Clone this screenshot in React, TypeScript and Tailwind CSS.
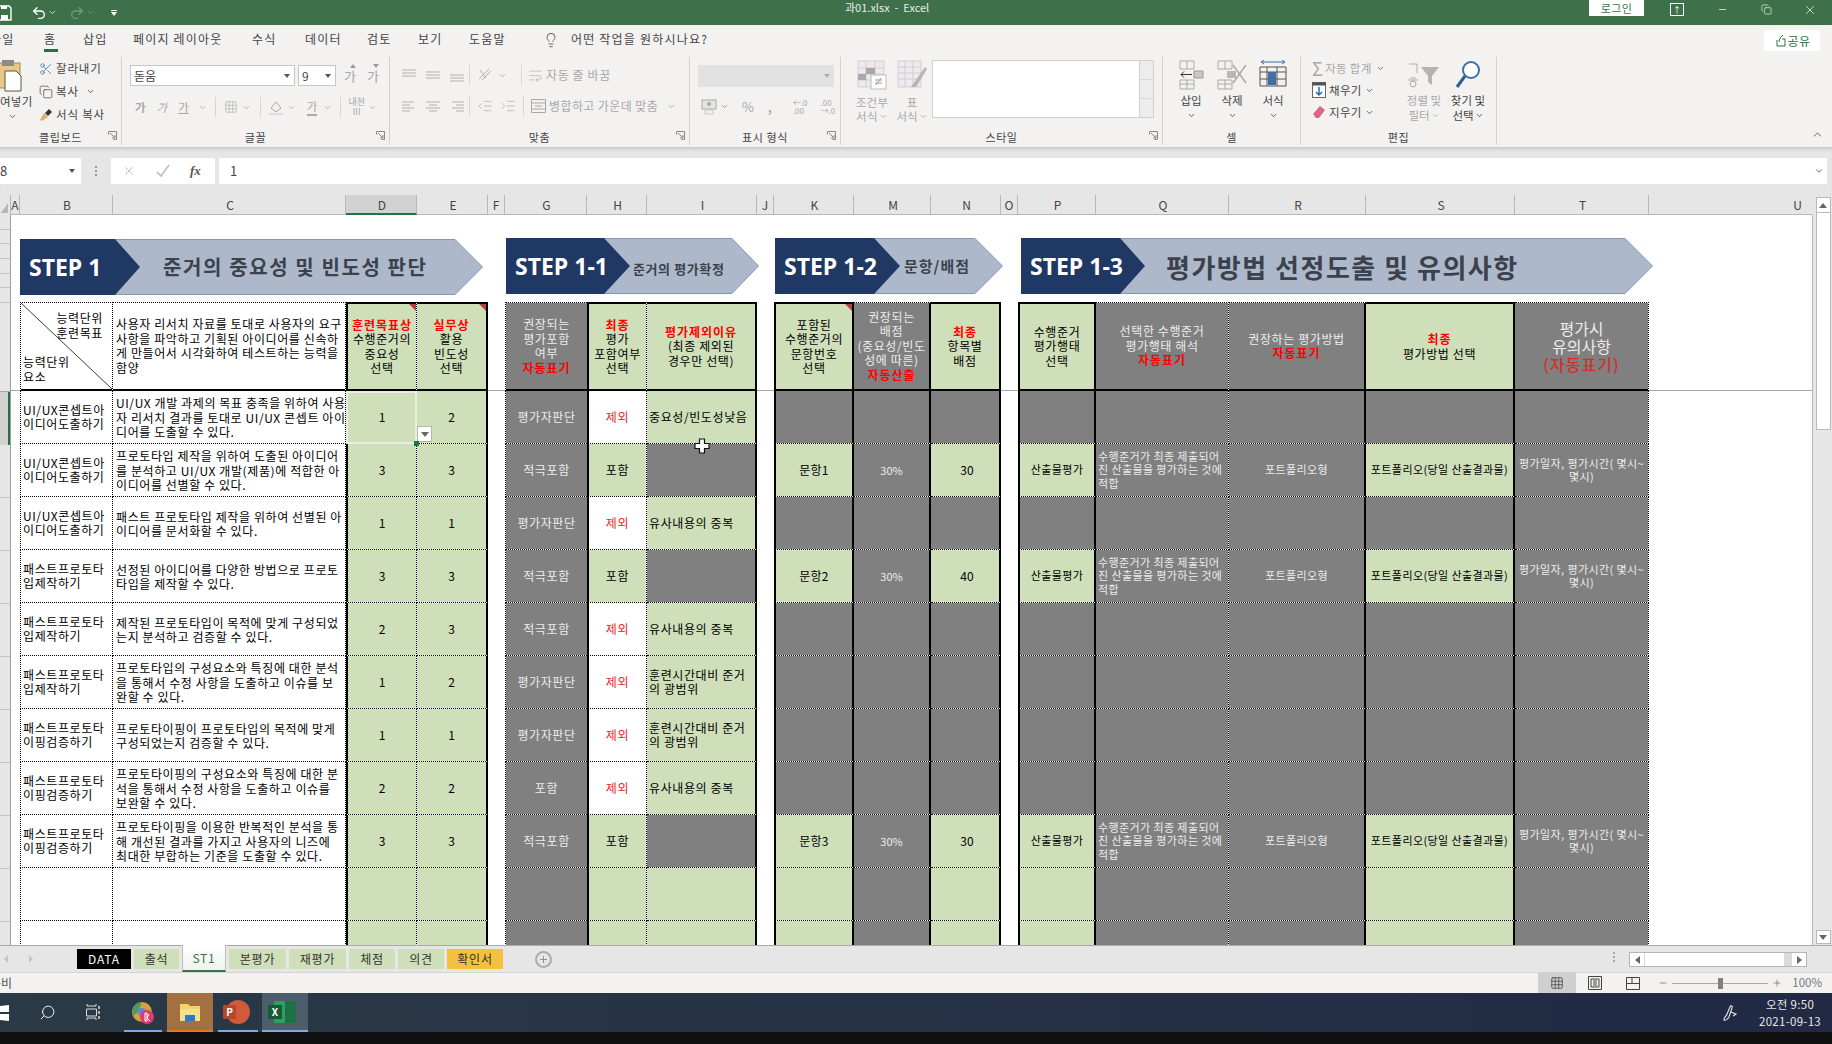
import { Fragment, type ReactNode } from "react";
import {
  ChevronDown,
  ChevronUp,
  Copy,
  Grid3x3,
  IndentDecrease,
  IndentIncrease,
  Lightbulb,
  Minus,
  Plus,
  Redo2,
  Scissors,
  Search,
  Undo2,
  WrapText,
  X,
} from "lucide-react";
import clsx from "clsx";

const cellBase = "border-b border-dotted border-black bg-clip-padding";
const R2 = "border-r-2 border-r-black [border-right-style:solid]!";
const L2 = "border-l-2 border-l-black [border-left-style:solid]!";
const T2 = "border-t-2 border-t-black [border-top-style:solid]!";
const B2 = "border-b-2 border-b-black [border-bottom-style:solid]!";

const edge: Record<string, string> = {
  B: "border-l border-r",
  C: "border-r",
  D: `${L2} border-r`,
  E: R2,
  G: "border-l",
  H: `${L2} border-r`,
  I: R2,
  K: `${L2} ${R2}`,
  M: R2,
  N: R2,
  P: `${L2} ${R2}`,
  Q: "border-r",
  R: R2,
  S: R2,
  T: "border-r",
};

const fills = { w: "bg-white", g: "bg-[#cfdfba]", x: "bg-[#808080]" };
type Fill = keyof typeof fills;

type Row = {
  b?: string[];
  c?: string[];
  d?: string;
  e?: string;
  g?: string;
  h?: string;
  i?: string[];
  k?: string;
  n?: string;
  filled?: boolean;
};

const UX = ["UI/UX콘셉트아", "이디어도출하기"];
const MAKE = ["패스트프로토타", "입제작하기"];
const TEST = ["패스트프로토타", "이핑검증하기"];
const DUP = ["유사내용의 중복"];
const WIDE = ["훈련시간대비 준거", "의 광범위"];

const rows: Row[] = [
  { b: UX, c: ["UI/UX 개발 과제의 목표 충족을 위하여 사용", "자 리서치 결과를 토대로 UI/UX 콘셉트 아이", "디어를 도출할 수 있다."], d: "1", e: "2", g: "평가자판단", h: "제외", i: ["중요성/빈도성낮음"] },
  { b: UX, c: ["프로토타입 제작을 위하여 도출된 아이디어", "를 분석하고 UI/UX 개발(제품)에 적합한 아", "이디어를 선별할 수 있다."], d: "3", e: "3", g: "적극포함", h: "포함", k: "문항1", n: "30", filled: true },
  { b: UX, c: ["패스트 프로토타입 제작을 위하여 선별된 아", "이디어를 문서화할 수 있다."], d: "1", e: "1", g: "평가자판단", h: "제외", i: DUP },
  { b: MAKE, c: ["선정된 아이디어를 다양한 방법으로 프로토", "타입을 제작할 수 있다."], d: "3", e: "3", g: "적극포함", h: "포함", k: "문항2", n: "40", filled: true },
  { b: MAKE, c: ["제작된 프로토타입이 목적에 맞게 구성되었", "는지 분석하고 검증할 수 있다."], d: "2", e: "3", g: "적극포함", h: "제외", i: DUP },
  { b: MAKE, c: ["프로토타입의 구성요소와 특징에 대한 분석", "을 통해서 수정 사항을 도출하고 이슈를 보", "완할 수 있다."], d: "1", e: "2", g: "평가자판단", h: "제외", i: WIDE },
  { b: TEST, c: ["프로토타이핑이 프로토타입의 목적에 맞게", "구성되었는지 검증할 수 있다."], d: "1", e: "1", g: "평가자판단", h: "제외", i: WIDE },
  { b: TEST, c: ["프로토타이핑의 구성요소와 특징에 대한 분", "석을 통해서 수정 사항을 도출하고 이슈를", "보완할 수 있다."], d: "2", e: "2", g: "포함", h: "제외", i: DUP },
  { b: TEST, c: ["프로토타이핑을 이용한 반복적인 분석을 통", "해 개선된 결과를 가지고 사용자의 니즈에", "최대한 부합하는 기준을 도출할 수 있다."], d: "3", e: "3", g: "적극포함", h: "포함", k: "문항3", n: "30", filled: true },
  {},
  {},
];

function Lines({ lines, className }: { lines: string[]; className?: string }) {
  return (
    <div className={clsx("leading-[14.5px] tracking-[0.6px] text-[12px] whitespace-nowrap", className)}>
      {lines.map((l, i) => (
        <div key={i}>{l}</div>
      ))}
    </div>
  );
}

function Cell({
  col,
  fill = "w",
  className,
  children,
}: {
  col: string;
  fill?: Fill;
  className?: string;
  children?: ReactNode;
}) {
  return (
    <div className={clsx(cellBase, edge[col], fills[fill], "relative flex min-w-0 items-center", className)}>
      {children}
    </div>
  );
}

function Mid({ children, className }: { children: ReactNode; className?: string }) {
  return <div className={clsx("w-full text-center", className)}>{children}</div>;
}

const Red = ({ children }: { children: ReactNode }) => (
  <div className="font-bold tracking-[1px] text-[#ff0000]">{children}</div>
);

function DataRow({ row, index }: { row: Row; index: number }) {
  const blank = row.b === undefined;
  const f = row.filled;
  const white = "text-[#ececec]";
  const small = "text-[11px] leading-[13.3px] tracking-[0.4px]";
  return (
    <Fragment>
      <div />
      <Cell col="B" className="pl-[2px]">{row.b && <Lines lines={row.b} />}</Cell>
      <Cell col="C" className="pl-[3px] pt-[2px]">{row.c && <Lines lines={row.c} />}</Cell>
      <Cell col="D" fill="g" className={index === 0 ? "outline outline-2 -outline-offset-2 outline-[#e8efe2]" : ""}>
        <Mid className="text-[12px]">{row.d}</Mid>
      </Cell>
      <Cell col="E" fill="g">
        <Mid className="text-[12px]">{row.e}</Mid>
        {index === 0 && (
          <>
            <div className="absolute left-0 top-[35px] z-10 flex h-[16px] w-[15px] items-center justify-center border border-[#b5b5b5] bg-white">
              <div className="h-0 w-0 border-x-[4px] border-t-[5px] border-x-transparent border-t-[#666]" />
            </div>
            <div className="absolute -left-[3px] -bottom-[3px] z-10 h-[5px] w-[5px] bg-[#217346]" />
          </>
        )}
      </Cell>
      <div />
      <Cell col="G" fill="x">
        <Mid className={clsx("text-[12px] tracking-[0.6px]", white)}>{row.g}</Mid>
      </Cell>
      <Cell col="H" fill={blank || row.h === "포함" ? "g" : "w"}>
        <Mid className={clsx("text-[12px] tracking-[0.6px]", row.h === "제외" ? "text-[#e82727]" : "text-black")}>{row.h}</Mid>
      </Cell>
      <Cell col="I" fill={f ? "x" : "g"} className="pl-[2px]">
        {row.i && <Lines lines={row.i} />}
        {index === 0 && (
          <svg viewBox="0 0 16 16" className="absolute left-[47px] -bottom-[11px] z-20 h-[16px] w-[16px]">
            <path d="M5.5 1h5v4.5H15v5h-4.500V15h-5v-4.500H1v-5h4.500z" fill="#fff" stroke="#111" strokeWidth="1.200" />
          </svg>
        )}
      </Cell>
      <div />
      <Cell col="K" fill={f || blank ? "g" : "x"}>
        <Mid className="text-[12px] tracking-[0.3px]">{row.k}</Mid>
      </Cell>
      <Cell col="M" fill="x">
        <Mid className={clsx("text-[11px]", white)}>{f ? "30%" : ""}</Mid>
      </Cell>
      <Cell col="N" fill={f || blank ? "g" : "x"}>
        <Mid className="text-[12px] pl-[4px]">{row.n}</Mid>
      </Cell>
      <div />
      <Cell col="P" fill={f || blank ? "g" : "x"}>
        <Mid className={small}>{f ? "산출물평가" : ""}</Mid>
      </Cell>
      <Cell col="Q" fill="x" className="pl-[2px]">
        {f && (
          <div className={clsx(small, white, "whitespace-nowrap")}>
            <div>수행준거가 최종 제출되어</div>
            <div>진 산출물을 평가하는 것에</div>
            <div>적합</div>
          </div>
        )}
      </Cell>
      <Cell col="R" fill="x">
        <Mid className={clsx(small, white)}>{f ? "포트폴리오형" : ""}</Mid>
      </Cell>
      <Cell col="S" fill={f || blank ? "g" : "x"}>
        <Mid className={clsx(small, "whitespace-nowrap")}>{f ? "포트폴리오(당일 산출결과물)" : ""}</Mid>
      </Cell>
      <Cell col="T" fill="x">
        {f && (
          <Mid className={clsx(small, white, "whitespace-nowrap")}>
            <div>평가일자, 평가시간( 몇시~</div>
            <div>몇시)</div>
          </Mid>
        )}
      </Cell>
      <div />
    </Fragment>
  );
}

function Tri() {
  return <div className="absolute right-0 top-0 h-0 w-0 border-l-[7px] border-t-[7px] border-l-transparent border-t-[#b5423c]" />;
}

function HeaderRow() {
  const head = "text-[12px] leading-[14.5px] tracking-[0.6px]";
  const light = "text-[#ececec]";
  const gap = <div className="border-b border-[#a6a6a6]" />;
  return (
    <Fragment>
      {gap}
      <Cell col="B" className={clsx(B2, "border-t text-[12px] tracking-[0.6px] leading-[14.500px]")}>
        <svg className="absolute inset-0 h-full w-full" viewBox="0 0 92 86" preserveAspectRatio="none">
          <line x1="0" y1="0" x2="92" y2="86" stroke="#222" strokeWidth="0.900" />
        </svg>
        <div className="flex h-full w-full flex-col justify-between pb-[5px] pl-[2px] pr-[9px] pt-[8px]">
          <div className="self-end">
            <div>능력단위</div>
            <div>훈련목표</div>
          </div>
          <div>
            <div>능력단위</div>
            <div>요소</div>
          </div>
        </div>
      </Cell>
      <Cell col="C" className={clsx(B2, "border-t pl-[3px]")}>
        <Lines lines={["사용자 리서치 자료를 토대로 사용자의 요구", "사항을 파악하고 기획된 아이디어를 신속하", "게 만들어서 시각화하여 테스트하는 능력을", "함양"]} />
      </Cell>
      <Cell col="D" fill="g" className={clsx(B2, T2, head)}>
        <Mid className="whitespace-nowrap"><Red>훈련목표상</Red><div>수행준거의</div><div>중요성</div><div>선택</div></Mid>
        <Tri />
      </Cell>
      <Cell col="E" fill="g" className={clsx(B2, T2, head)}>
        <Mid><Red>실무상</Red><div>활용</div><div>빈도성</div><div>선택</div></Mid>
        <Tri />
      </Cell>
      {gap}
      <Cell col="G" fill="x" className={clsx(B2, "border-t", head, light)}>
        <Mid><div>권장되는</div><div>평가포함</div><div>여부</div><Red>자동표기</Red></Mid>
      </Cell>
      <Cell col="H" fill="g" className={clsx(B2, T2, head)}>
        <Mid><Red>최종</Red><div>평가</div><div>포함여부</div><div>선택</div></Mid>
      </Cell>
      <Cell col="I" fill="g" className={clsx(B2, T2, head)}>
        <Mid><Red>평가제외이유</Red><div>(최종 제외된</div><div>경우만 선택)</div></Mid>
      </Cell>
      {gap}
      <Cell col="K" fill="g" className={clsx(B2, T2, head)}>
        <Mid><div>포함된</div><div>수행준거의</div><div>문항번호</div><div>선택</div></Mid>
        <Tri />
      </Cell>
      <Cell col="M" fill="x" className={clsx(B2, "border-t", head, light)}>
        <Mid className="whitespace-nowrap"><div>권장되는</div><div>배점</div><div>(중요성/빈도</div><div>성에 따른)</div><Red>자동산출</Red></Mid>
      </Cell>
      <Cell col="N" fill="g" className={clsx(B2, T2, head)}>
        <Mid><Red>최종</Red><div>항목별</div><div>배점</div></Mid>
      </Cell>
      {gap}
      <Cell col="P" fill="g" className={clsx(B2, T2, head)}>
        <Mid><div>수행준거</div><div>평가행태</div><div>선택</div></Mid>
      </Cell>
      <Cell col="Q" fill="x" className={clsx(B2, "border-t", head, light)}>
        <Mid className="whitespace-nowrap"><div>선택한 수행준거</div><div>평가행태 해석</div><Red>자동표기</Red></Mid>
      </Cell>
      <Cell col="R" fill="x" className={clsx(B2, "border-t", head, light)}>
        <Mid><div>권장하는 평가방법</div><Red>자동표기</Red></Mid>
      </Cell>
      <Cell col="S" fill="g" className={clsx(B2, T2, head)}>
        <Mid><Red>최종</Red><div>평가방법 선택</div></Mid>
      </Cell>
      <Cell col="T" fill="x" className={clsx(B2, "border-t text-[16px] leading-[18px]", light)}>
        <Mid><div>평가시</div><div>유의사항</div><div className="font-medium tracking-[1px] text-[#d62f2b]">(자동표기)</div></Mid>
      </Cell>
      {gap}
    </Fragment>
  );
}

function Banner({
  w,
  base,
  tip,
  end,
  step,
  stepW,
  title,
  titleClass,
  className,
}: {
  w: number;
  base: number;
  tip: number;
  end: number;
  step: string;
  stepW: number;
  title: string;
  titleClass: string;
  className: string;
}) {
  return (
    <div className={clsx("relative h-[56px]", className)}>
      <svg className="absolute inset-0" width={w} height={56} viewBox={`0 0 ${w} 56`}>
        <polygon points={`0.500,0.500 ${end},0.500 ${w - 0.5},28 ${end},55.500 0.500,55.500`} fill="#adb9ca" stroke="#8497b0" />
        <polygon points={`0,0 ${base},0 ${tip},28 ${base},56 0,56`} fill="#203864" />
      </svg>
      <div className="relative flex h-full items-center font-bold">
        <div className="shrink-0 pl-[9px] font-['Open_Sans',sans-serif] text-[23px] leading-none text-white" style={{ width: stepW }}>
          {step}
        </div>
        <div className={clsx("whitespace-nowrap text-[#3b414d]", titleClass)}>{title}</div>
      </div>
    </div>
  );
}

function Sheet() {
  return (
    <div className="grid h-[730px] min-w-0 flex-1 grid-cols-[9px_93px_233px_71px_71px_17px_82px_60px_110px_17px_80px_77px_70px_17px_78px_133px_137px_149px_134px_163px] grid-rows-[24px_56px_7px_89px_repeat(11,53px)] overflow-hidden bg-white text-black">
      <div className="col-span-full" />
      <Banner className="col-span-4 col-start-2 w-[463px]" w={463} base={95} tip={120} end={435} step="STEP 1" stepW={143} title="준거의 중요성 및 빈도성 판단" titleClass="text-[20px] tracking-[1.600px]" />
      <Banner className="col-span-3 col-start-7 ml-px -mt-px w-[253px]" w={253} base={98} tip={124} end={226} step="STEP 1-1" stepW={127} title="준거의 평가확정" titleClass="pt-[6px] text-[13px] tracking-[0.600px]" />
      <Banner className="col-span-3 col-start-11 ml-px -mt-px w-[228px]" w={228} base={99} tip={125} end={200} step="STEP 1-2" stepW={129} title="문항/배점" titleClass="text-[15px] tracking-[1px]" />
      <Banner className="col-span-6 col-start-15 ml-[3px] -mt-px w-[632px]" w={632} base={99} tip={124} end={604} step="STEP 1-3" stepW={145} title="평가방법 선정도출 및 유의사항" titleClass="text-[26px] tracking-[1.500px]" />
      <div className="col-span-full" />
      <HeaderRow />
      {rows.map((r, i) => (
        <DataRow key={i} row={r} index={i} />
      ))}
    </div>
  );
}

const colHeads = [
  ["A", 9], ["B", 93], ["C", 233], ["D", 71], ["E", 71], ["F", 17], ["G", 82], ["H", 60], ["I", 110], ["J", 17],
  ["K", 80], ["M", 77], ["N", 70], ["O", 17], ["P", 78], ["Q", 133], ["R", 137], ["S", 149], ["T", 134],
] as const;

function ColumnHeader() {
  return (
    <div className="flex h-[20px] bg-[#e6e6e6] text-[12px] leading-[20px] text-[#444]">
      <div className="relative h-full w-[11px] shrink-0 border-r border-[#b5b5b5]">
        <div className="absolute bottom-[2px] right-[2px] h-0 w-0 border-b-[10px] border-l-[7px] border-b-[#b7b7b7] border-l-transparent" />
      </div>
      {colHeads.map(([name, w]) => (
        <div
          key={name}
          style={{ width: w }}
          className={clsx(
            "shrink-0 border-r border-b border-[#b9b9b9] text-center",
            w > 20 && "pl-[2px]",
            name === "D" && "border-b-2 border-b-[#217346] bg-[#d2d2d2]",
          )}
        >
          {name}
        </div>
      ))}
      <div className="w-[163px] shrink-0 border-b border-[#b9b9b9] pr-[10px] text-right">U</div>
      <div className="flex h-full w-[20px] items-center justify-center pl-[2px]">
        <div className="flex h-[16px] w-[15px] items-center justify-center border border-[#b9b9b9] bg-white">
          <div className="h-0 w-0 border-x-[4px] border-b-[5px] border-x-transparent border-b-[#666]" />
        </div>
      </div>
    </div>
  );
}

function RowHeader() {
  const small = [0, 1, 2, 3, 4, 5];
  return (
    <div className="flex h-[730px] w-[11px] shrink-0 flex-col overflow-hidden border-r border-[#9f9f9f] bg-[#e6e6e6]">
      {small.map((i) => (
        <div key={i} className="h-[14.670px] shrink-0 border-b border-[#c4c4c4]" />
      ))}
      <div className="h-[89px] shrink-0 border-b border-[#a6a6a6]" />
      <div className="h-[53px] shrink-0 border-r-2 border-r-[#217346] bg-[#d2d2d2]" />
      {rows.slice(1).map((_, i) => (
        <div key={i} className="h-[53px] shrink-0 border-b border-[#c4c4c4]" />
      ))}
    </div>
  );
}

function VScroll() {
  return (
    <div className="flex h-[730px] w-[20px] shrink-0 flex-col items-center border-l border-[#b9b9b9] bg-[#e6e6e6] pl-px">
      <div className="mt-[-3px] h-[218px] w-[15px] shrink-0 border border-[#b9b9b9] bg-white" />
      <div className="flex-1" />
      <div className="mb-[1px] flex h-[14px] w-[15px] items-center justify-center border border-[#b9b9b9] bg-white">
        <div className="h-0 w-0 border-x-[4px] border-t-[5px] border-x-transparent border-t-[#666]" />
      </div>
    </div>
  );
}

function Caret({ className }: { className?: string }) {
  return <ChevronDown size={9} strokeWidth={2.2} className={clsx("shrink-0", className)} />;
}

function Bars({ rows: bars, gray = true }: { rows: number[][]; gray?: boolean }) {
  return (
    <svg width="16" height="14" viewBox="0 0 16 14" className="shrink-0">
      {bars.map(([a, b, y], i) => (
        <line key={i} x1={a} x2={b} y1={y} y2={y} stroke={gray ? "#b0b0b0" : "#555"} strokeWidth="1" />
      ))}
    </svg>
  );
}

function Launcher() {
  return (
    <svg width="9" height="9" viewBox="0 0 9 9" className="absolute bottom-[5px] right-[4px]">
      <path d="M.5 3.500V.5h8v8h-3M2 2l5 5M4 7h3V4" fill="none" stroke="#888" />
    </svg>
  );
}

function Group({
  w,
  label,
  launcher,
  children,
  className,
}: {
  w: number;
  label: string;
  launcher?: boolean;
  children: ReactNode;
  className?: string;
}) {
  return (
    <div style={{ width: w }} className={clsx("relative flex h-[88px] shrink-0 flex-col border-r border-[#d2d2d2]", className)}>
      <div className="min-h-0 flex-1">{children}</div>
      <div className="text-center text-[11px] leading-[16px] tracking-[0.6px] text-[#444]">{label}</div>
      {launcher && <Launcher />}
    </div>
  );
}

function Vsep({ className }: { className: string }) {
  return <div className={clsx("h-[20px] w-px shrink-0 bg-[#d6d6d6]", className)} />;
}

const D = "text-[#a8a8a8]";

function Ribbon() {
  return (
    <div className="h-[122px] bg-[#f3f2f1] text-[#444]">
      <div className="flex h-[32px] items-end pb-[6px] text-[12px] leading-[24px] tracking-[1.200px]">
        <div className="-ml-[10px] w-[54px]">파일</div>
        <div className="relative w-[39px]">
          홈
          <div className="absolute -bottom-[1px] left-0 h-[3px] w-[14px] bg-[#217346]" />
        </div>
        <div className="w-[50px]">삽입</div>
        <div className="w-[119px]">페이지 레이아웃</div>
        <div className="w-[53px]">수식</div>
        <div className="w-[62px]">데이터</div>
        <div className="w-[51px]">검토</div>
        <div className="w-[51px]">보기</div>
        <div className="w-[74px]">도움말</div>
        <Lightbulb size={16} strokeWidth={1.200} className="mb-[3px] shrink-0" />
        <div className="ml-[12px]">어떤 작업을 원하시나요?</div>
        <div className="ml-auto mr-[12px] flex h-[21px] w-[56px] items-center justify-center gap-[2px] bg-white text-[#2c6e49]">
          <svg width="12" height="13" viewBox="0 0 12 13"><path d="M3 6v6h8V5H8M5 8l1-4 3-3" fill="none" stroke="#2c6e49" /></svg>
          <span className="tracking-[0.4px]">공유</span>
        </div>
      </div>
      <div className="flex h-[90px] items-start text-[11.500px]">
        <Group w={122} label="클립보드" launcher>
          <div className="flex h-full">
            <div className="relative w-[34px] shrink-0 overflow-hidden">
              <svg width="34" height="40" viewBox="0 0 34 40" className="mt-[1px]">
                <rect x="-16" y="5" width="36" height="25" fill="#e8c884" stroke="#9c8a5c" />
                <rect x="2" y="2" width="12" height="6" fill="#8a8a8a" />
                <path d="M5 13h11l5 5v15H5z" fill="#fff" stroke="#555" />
              </svg>
              <div className="-ml-[11px] mt-[-5px] whitespace-nowrap text-[11.500px] tracking-[0.300px]">붙여넣기</div>
              <Caret className="ml-[8px] mt-[2px]" />
            </div>
            <div className="ml-[5px] flex flex-col gap-[6px] pt-[3px] tracking-[0.8px] leading-[17px]">
              <div className="flex items-center gap-[3px]"><Scissors size={14} strokeWidth={1.300} className="text-[#3f6fa5]" />잘라내기</div>
              <div className="flex items-center gap-[3px]"><Copy size={14} strokeWidth={1.200} />복사<Caret className="ml-[4px]" /></div>
              <div className="flex items-center gap-[3px]">
                <svg width="14" height="14" viewBox="0 0 14 14"><path d="M1 12l4-7 4 4-6 4z" fill="#d8b26e" /><path d="M6 5l4-4 3 3-4 4z" fill="#333" /></svg>
                서식 복사
              </div>
            </div>
          </div>
        </Group>
        <Group w={268} label="글꼴" launcher>
          <div className="flex items-center gap-[3px] pl-[8px] pt-[8px]">
            <div className="flex h-[21px] w-[165px] items-center justify-between border border-[#c6c6c6] bg-white pl-[3px] pr-[4px] text-[12px]">
              돋움
              <div className="h-0 w-0 border-x-[3px] border-t-[4px] border-x-transparent border-t-[#555]" />
            </div>
            <div className="flex h-[21px] w-[38px] items-center justify-between border border-[#c6c6c6] bg-white pl-[3px] pr-[4px] text-[12px]">
              9
              <div className="h-0 w-0 border-x-[3px] border-t-[4px] border-x-transparent border-t-[#555]" />
            </div>
            <div className={clsx("ml-[5px] flex gap-[11px] text-[13px]", D)}>
              <span className="relative">
                가
                <span className="absolute -top-[2px] right-0 h-0 w-0 border-x-[3px] border-b-[4px] border-x-transparent border-b-[#9a9a9a]" />
              </span>
              <span className="relative">
                가
                <span className="absolute -top-[2px] right-0 h-0 w-0 border-x-[3px] border-t-[4px] border-x-transparent border-t-[#9a9a9a]" />
              </span>
            </div>
          </div>
          <div className={clsx("flex items-center pl-[13px] pt-[11px] leading-[20px]", D)}>
            <span className="font-bold">가</span>
            <span className="ml-[11px] italic">가</span>
            <span className="ml-[11px] underline">가</span>
            <Caret className="ml-[9px]" />
            <Vsep className="ml-[8px] mr-[8px]" />
            <Grid3x3 size={14} strokeWidth={1} />
            <Caret className="ml-[4px]" />
            <Vsep className="ml-[9px] mr-[7px]" />
            <svg width="16" height="16" viewBox="0 0 16 16"><path d="M3 9l5-6 5 6-5 4z" fill="none" stroke="#a8a8a8" /><rect x="1" y="14" width="14" height="2" fill="#e4dbe6" /></svg>
            <Caret className="ml-[3px]" />
            <span className="ml-[11px] border-b-2 border-[#a8a8a8] leading-[15px]">가</span>
            <Caret className="ml-[6px]" />
            <Vsep className="ml-[8px] mr-[7px]" />
            <div className="flex flex-col items-center text-[9px] leading-[10px]">
              <span>내천</span>
              <span>III</span>
            </div>
            <Caret className="ml-[3px]" />
          </div>
        </Group>
        <Group w={300} label="맞춤" launcher>
          <div className="flex items-center pl-[11px] pt-[8px]">
            <div className="flex gap-[8px]">
              <Bars rows={[[1, 15, 2], [1, 15, 5], [1, 15, 8]]} />
              <Bars rows={[[1, 15, 4], [1, 15, 7], [1, 15, 10]]} />
              <Bars rows={[[1, 15, 7], [1, 15, 10], [1, 15, 13]]} />
            </div>
            <Vsep className="ml-[4px] mr-[7px]" />
            <svg width="18" height="18" viewBox="0 0 18 18"><path d="M2 13L12 3M5 14l9-9M3 4l6 8" fill="none" stroke="#b0b0b0" /></svg>
            <Caret className={clsx("ml-[3px]", D)} />
            <Vsep className="ml-[14px] mr-[6px]" />
            <div className={clsx("flex items-center gap-[3px] text-[12px] tracking-[0.6px]", D)}>
              <WrapText size={15} strokeWidth={1} />자동 줄 바꿈
            </div>
          </div>
          <div className="flex items-center pl-[11px] pt-[11px]">
            <div className="flex gap-[8px]">
              <Bars rows={[[1, 13, 3], [1, 9, 6], [1, 13, 9], [1, 9, 12]]} />
              <Bars rows={[[1, 15, 3], [4, 12, 6], [1, 15, 9], [4, 12, 12]]} />
              <Bars rows={[[3, 15, 3], [7, 15, 6], [3, 15, 9], [7, 15, 12]]} />
            </div>
            <Vsep className="ml-[4px] mr-[7px]" />
            <IndentDecrease size={16} strokeWidth={1} className={D} />
            <IndentIncrease size={16} strokeWidth={1} className={clsx("ml-[7px]", D)} />
            <Vsep className="ml-[7px] mr-[7px]" />
            <div className={clsx("flex items-center gap-[3px] text-[12px] tracking-[0.4px]", D)}>
              <svg width="15" height="16" viewBox="0 0 15 16"><path d="M.5 1.500h14v13H.5zM.5 5h14M.5 11h14M4 8h7" fill="none" stroke="#a8a8a8" /></svg>
              병합하고 가운데 맞춤
              <Caret className="ml-[6px]" />
            </div>
          </div>
        </Group>
        <Group w={151} label="표시 형식" launcher>
          <div className="pl-[8px] pt-[8px]">
            <div className="flex h-[22px] w-[136px] items-center justify-end bg-[#e1e1e1] pr-[4px]">
              <div className="h-0 w-0 border-x-[3px] border-t-[4px] border-x-transparent border-t-[#aaa]" />
            </div>
          </div>
          <div className={clsx("flex items-center pl-[11px] pt-[10px] text-[12px]", D)}>
            <svg width="17" height="16" viewBox="0 0 17 16"><rect x="1" y="1" width="14" height="9" fill="#e4e4e4" stroke="#a8a8a8" /><circle cx="8" cy="5" r="2" fill="#a8a8a8" /><rect x="4" y="11" width="8" height="4" fill="none" stroke="#c8c8c8" /></svg>
            <Caret className="ml-[2px] text-[#888]" />
            <span className="ml-[13px] text-[13px]">%</span>
            <span className="ml-[14px] font-bold">,</span>
            <span className="ml-[21px] text-[8px] leading-[8px]">←.0<br />.00</span>
            <span className="ml-[13px] text-[8px] leading-[8px]">.00<br />→.0</span>
          </div>
        </Group>
        <Group w={322} label="스타일" launcher>
          <div className="flex pl-[13px] pt-[3px]">
            <div className={clsx("flex w-[36px] flex-col items-center leading-[14px] tracking-[0.3px]", D)}>
              <svg width="30" height="30" viewBox="0 0 30 30">
                <path d="M1 1h26v26H1zM1 8h26M1 14h26M1 20h26M9 1v26M18 1v26" fill="#f1e7ee" stroke="#cfcfcf" />
                <rect x="9" y="8" width="9" height="6" fill="#a8a8a8" />
                <rect x="1" y="14" width="8" height="6" fill="#a8a8a8" />
                <rect x="14" y="15" width="15" height="14" fill="#fff" stroke="#bbb" />
                <path d="M19 25l5-7M18 20h7M18 23h7" stroke="#999" fill="none" />
              </svg>
              <div className="mt-[5px]">조건부</div>
              <div className="flex items-center">서식<Caret className="ml-[1px]" /></div>
            </div>
            <div className={clsx("ml-[4px] flex w-[36px] flex-col items-center leading-[14px]", D)}>
              <svg width="30" height="30" viewBox="0 0 30 30">
                <path d="M1 1h23v26H1zM1 7h23M1 13h23M1 19h23M8 1v26M16 1v26" fill="#f1e7ee" stroke="#cfcfcf" />
                <path d="M14 27L28 7l2 2-11 18z" fill="#b5b5b5" />
              </svg>
              <div className="mt-[5px]">표</div>
              <div className="flex items-center">서식<Caret className="ml-[1px]" /></div>
            </div>
            <div className="ml-[2px] flex h-[58px] w-[222px] border border-[#d0d0d0] bg-white">
              <div className="flex-1" />
              <div className="flex w-[14px] flex-col border-l border-[#d0d0d0] bg-[#ececec]">
                <div className="flex-1 border-b border-[#d8d8d8]" />
                <div className="flex-1 border-b border-[#d8d8d8]" />
                <div className="flex-1" />
              </div>
            </div>
          </div>
        </Group>
        <Group w={138} label="셀">
          <div className="flex gap-[5px] pl-[10px] pt-[3px] text-center leading-[14px]">
            {[
              ["삽입", <svg key="a" width="28" height="30" viewBox="0 0 28 30"><path d="M3 1h14v8H3zM3 20h14v9H3zM10 1v8M10 20v9M3 24h14" fill="none" stroke="#aaa" /><path d="M17 11h9v7h-9z" fill="#c8c8c8" stroke="#999" /><path d="M15 14.500H4m3-3-3 3 3 3" fill="none" stroke="#333" /></svg>],
              ["삭제", <svg key="b" width="32" height="30" viewBox="0 0 32 30"><path d="M2 1h14v8H2zM2 20h14v9H2zM9 1v8M9 20v9M2 24h14" fill="none" stroke="#aaa" /><rect x="11" y="11" width="9" height="7" fill="#b8b8b8" /><path d="M17 5l13 18M30 5L17 23" stroke="#aaa" strokeWidth="1.500" /></svg>],
              ["서식", <svg key="c" width="28" height="30" viewBox="0 0 28 30"><path d="M2 2h24M2 2l3-2M2 2l3 2M26 2l-3-2M26 2l-3 2" fill="none" stroke="#3f6fa5" /><path d="M1 7h26v19H1zM1 12h26M1 19h26M8 7v19M18 7v19" fill="none" stroke="#555" /><rect x="9" y="12" width="8" height="13" fill="#3f6fa5" /></svg>],
            ].map(([t, icon], i) => (
              <div key={i} className="flex w-[36px] flex-col items-center">
                {icon}
                <div className="mt-[3px]">{t}</div>
                <Caret className="mt-[4px]" />
              </div>
            ))}
          </div>
        </Group>
        <Group w={196} label="편집">
          <div className="flex pl-[11px] pt-[2px]">
            <div className="flex w-[91px] flex-col gap-[4px] leading-[18px] tracking-[0.3px]">
              <div className={clsx("flex items-center", D)}>
                <span className="text-[18px] leading-[18px]">Σ</span>
                <span className="ml-[2px] whitespace-nowrap">자동 합계</span>
                <Caret className="ml-[4px] text-[#555]" />
              </div>
              <div className="flex items-center">
                <svg width="14" height="16" viewBox="0 0 14 16"><rect x=".5" y=".5" width="13" height="15" fill="#fff" stroke="#666" /><rect x=".5" y=".5" width="13" height="3" fill="#555" /><path d="M7 5v8M4 10l3 3 3-3" fill="none" stroke="#2b6cb0" strokeWidth="1.500" /></svg>
                <span className="ml-[3px]">채우기</span>
                <Caret className="ml-[3px]" />
              </div>
              <div className="flex items-center">
                <svg width="14" height="14" viewBox="0 0 14 14"><path d="M1 9l7-8 5 4-6 8H4z" fill="#d9658c" /></svg>
                <span className="ml-[3px]">지우기</span>
                <Caret className="ml-[3px]" />
              </div>
            </div>
            <div className={clsx("flex w-[42px] flex-col items-center text-center leading-[15px]", D)}>
              <svg width="36" height="30" viewBox="0 0 36 30"><path d="M3 5h8v9" fill="none" stroke="#aaa" /><path d="M4 19h6M2 21h10M7 21v1" stroke="#aaa" fill="none" /><circle cx="7" cy="25" r="3" fill="none" stroke="#aaa" /><path d="M15 8h18l-7 9v9l-4-3v-6z" fill="#b4b4b4" /></svg>
              <div className="mt-[4px] whitespace-nowrap">정렬 및</div>
              <div className="flex items-center">필터<Caret className="ml-[1px]" /></div>
            </div>
            <div className="ml-[1px] flex w-[44px] flex-col items-center text-center leading-[15px]">
              <svg width="30" height="30" viewBox="0 0 30 30"><circle cx="18" cy="11" r="8" fill="#fff" stroke="#3f6fa5" strokeWidth="2" /><path d="M12 17L4 28" stroke="#2b5f94" strokeWidth="3" /></svg>
              <div className="mt-[4px] whitespace-nowrap">찾기 및</div>
              <div className="flex items-center">선택<Caret className="ml-[1px]" /></div>
            </div>
          </div>
        </Group>
        <div className="flex h-[86px] flex-1 items-end justify-end pb-[2px] pr-[8px]">
          <ChevronUp size={13} strokeWidth={1.500} />
        </div>
      </div>
    </div>
  );
}

function TitleBar() {
  return (
    <div className="relative flex h-[25px] items-center bg-[#3e714a] text-[11px] text-[#e6eee8]">
      <svg width="14" height="16" viewBox="0 0 14 16" className="-ml-[2px] shrink-0">
        <path d="M0 1h11l2 2v12H0z" fill="none" stroke="#fff" strokeWidth="1.400" />
        <rect x="3" y="10" width="7" height="5" fill="#fff" />
        <rect x="3" y="1" width="6" height="3" fill="#fff" />
      </svg>
      <Undo2 size={16} strokeWidth={2} className="ml-[19px] text-white" />
      <Caret className="ml-[1px] text-[#dfe9e2]" />
      <Redo2 size={16} strokeWidth={2} className="ml-[12px] text-[#6f9a7a]" />
      <Caret className="ml-[1px] text-[#6f9a7a]" />
      <div className="ml-[16px] flex flex-col items-center gap-[1px]">
        <div className="h-px w-[6px] bg-white" />
        <div className="h-0 w-0 border-x-[3px] border-t-[4px] border-x-transparent border-t-white" />
      </div>
      <div className="ml-[728px] pb-[11px] whitespace-nowrap">과01.xlsx&nbsp; - &nbsp;Excel</div>
      <div className="ml-auto flex h-full items-start">
        <div className="flex h-[16px] w-[55px] items-center justify-center bg-white text-[11px] tracking-[0.4px] text-[#3e714a]">로그인</div>
        <div className="ml-[26px] mt-[3px] flex h-[13px] w-[14px] items-center justify-center border border-white text-[8px] leading-none text-white">↑</div>
        <Minus size={11} strokeWidth={1.500} className="ml-[33px] mt-[4px] text-white" />
        <Copy size={11} strokeWidth={1.300} className="ml-[33px] mt-[4px] text-white" />
        <X size={14} strokeWidth={1.200} className="ml-[31px] mr-[15px] mt-[3px] text-white" />
      </div>
    </div>
  );
}

function FormulaBar() {
  return (
    <div className="flex h-[48px] items-center gap-0 bg-[#e6e6e6] pb-[1px] text-[#444] shadow-[inset_0_4px_4px_-3px_rgba(0,0,0,0.2)]">
      <div className="flex h-[26px] w-[81px] items-center justify-between bg-white pl-0 pr-[6px] text-[13px]">
        8
        <div className="h-0 w-0 border-x-[3px] border-t-[4px] border-x-transparent border-t-[#555]" />
      </div>
      <div className="flex w-[30px] flex-col items-center gap-[2px]">
        <div className="h-[2px] w-[2px] bg-[#999]" />
        <div className="h-[2px] w-[2px] bg-[#999]" />
        <div className="h-[2px] w-[2px] bg-[#999]" />
      </div>
      <div className="flex h-[26px] w-[104px] items-center bg-white pl-[11px] text-[#bdbdbd]">
        <X size={14} strokeWidth={1.500} />
        <svg width="16" height="14" viewBox="0 0 16 14" className="ml-[19px]"><path d="M2 8l4 4 8-11" fill="none" stroke="#bdbdbd" strokeWidth="1.600" /></svg>
        <span className="ml-[19px] font-['Liberation_Serif',serif] text-[13px] font-bold italic text-[#555]">fx</span>
      </div>
      <div className="ml-[4px] flex h-[26px] w-[1608px] items-center justify-between bg-white pl-[11px] pr-[3px] text-[13px]">
        1
        <ChevronDown size={10} strokeWidth={2} />
      </div>
    </div>
  );
}

const tabs = [
  ["DATA", 54, "bg-black text-white"],
  ["출석", 45, "bg-[#cfdfba] text-[#333]"],
  ["ST1", 44, "border-b-2 border-x border-t-0 border-b-[#3e714a] border-x-[#bdbdbd] bg-gradient-to-b from-white to-[#eef3ee] text-[#3e714a]"],
  ["본평가", 57, "bg-[#cfdfba] text-[#333]"],
  ["재평가", 57, "bg-[#cfdfba] text-[#333]"],
  ["체점", 46, "bg-[#cfdfba] text-[#333]"],
  ["의견", 46, "bg-[#cfdfba] text-[#333]"],
  ["확인서", 56, "bg-[#f4c13e] text-[#333]"],
] as const;

function SheetTabs() {
  return (
    <div className="flex h-[27px] items-start border-t border-[#a9a9a9] bg-[#e6e6e6] text-[12px] tracking-[0.8px]">
      <div className="flex h-full w-[77px] items-center gap-[21px] pl-[4px]">
        <div className="h-0 w-0 border-y-[4px] border-r-[4px] border-y-transparent border-r-[#c4c4c4]" />
        <div className="h-0 w-0 border-y-[4px] border-l-[4px] border-y-transparent border-l-[#c4c4c4]" />
      </div>
      <div className="flex gap-[3px] pt-[3px]">
        {tabs.map(([t, w, c]) => (
          <div key={t} style={{ width: w }} className={clsx("flex h-[20px] items-center justify-center", c, t === "ST1" && "-mt-[4px] h-[27px]")}>
            {t}
          </div>
        ))}
      </div>
      <div className="ml-[32px] mt-[5px] flex h-[17px] w-[17px] shrink-0 items-center justify-center rounded-full border-2 border-[#ababab]">
        <Plus size={11} strokeWidth={2} className="text-[#888]" />
      </div>
      <div className="ml-[1061px] mt-[6px] flex flex-col gap-[2px]">
        <div className="h-[2px] w-[2px] bg-[#a5a5a5]" />
        <div className="h-[2px] w-[2px] bg-[#a5a5a5]" />
        <div className="h-[2px] w-[2px] bg-[#a5a5a5]" />
      </div>
      <div className="ml-[14px] mt-[6px] flex h-[15px] w-[178px] border border-[#b5b5b5] bg-[#dadada]">
        <div className="flex w-[14px] items-center justify-center bg-white">
          <div className="h-0 w-0 border-y-[4px] border-r-[5px] border-y-transparent border-r-[#666]" />
        </div>
        <div className="ml-[1px] w-[139px] bg-white" />
        <div className="ml-auto flex w-[14px] items-center justify-center bg-white">
          <div className="h-0 w-0 border-y-[4px] border-l-[5px] border-y-transparent border-l-[#666]" />
        </div>
      </div>
    </div>
  );
}

function StatusBar() {
  return (
    <div className="flex h-[21px] items-center border-t border-[#d4d4d4] bg-[#f3f2f1] text-[12px] text-[#555]">
      <div className="-ml-[10px]">준비</div>
      <div className="ml-auto flex h-full items-center">
        <div className="flex h-full w-[38px] items-center justify-center bg-[#cfcfcf]">
          <Grid3x3 size={14} strokeWidth={1.200} className="text-[#333]" />
        </div>
        <svg width="14" height="14" viewBox="0 0 14 14" className="ml-[12px]"><path d="M.5.5h13v13H.5zM3 3h8v8H3zM5 5h4M5 7h4M5 9h4" fill="none" stroke="#444" /></svg>
        <svg width="14" height="14" viewBox="0 0 14 14" className="ml-[24px]"><path d="M.5 1.500h13v12H.5zM6 1.500v6H.5M13 7.500H6" fill="none" stroke="#444" /></svg>
        <Minus size={10} strokeWidth={1.500} className="ml-[18px]" />
        <div className="relative ml-[4px] h-px w-[96px] bg-[#aaa]">
          <div className="absolute left-[46px] -top-[5px] h-[11px] w-[5px] bg-[#808080]" />
        </div>
        <Plus size={10} strokeWidth={1.500} className="ml-[4px]" />
        <div className="ml-[10px] mr-[10px] text-[11.500px] text-[#777]">100%</div>
      </div>
    </div>
  );
}

function Taskbar() {
  return (
    <div className="flex h-[39px] items-center bg-gradient-to-r from-[#2a3a46] to-[#212945] text-[11.500px] text-[#e8e8e8]">
      <svg width="9" height="16" viewBox="0 0 9 16" className="shrink-0"><path d="M0 1l9-1v7H0zM0 9h9v7l-9-1z" fill="#fff" /></svg>
      <Search size={17} strokeWidth={1.300} className="ml-[30px] -scale-x-100 text-white" />
      <svg width="15" height="17" viewBox="0 0 15 17" className="ml-[30px]"><path d="M1 0v2h9V0M1 16v-2h9v2M.5 5h10v7H.5z" fill="none" stroke="#ddd" /><path d="M13 2v3M13 7v3M13 12v3" stroke="#ddd" strokeWidth="1.500" /></svg>
      <div className="ml-[23px] flex h-full w-[38px] flex-col items-center justify-center border-b-2 border-[#7aaee0] pt-[2px]">
        <svg width="24" height="26" viewBox="0 0 24 26">
          <circle cx="11" cy="12" r="10" fill="#d9a13a" />
          <path d="M11 2a10 10 0 0 0-9 14l5-4z" fill="#4f9a5b" />
          <circle cx="11" cy="12" r="4" fill="#5f86d8" />
          <circle cx="16" cy="17" r="7" fill="#dc3d6c" />
          <path d="M14 13h2v8h-2zM18 14l-2 4 3 3" stroke="#fff" fill="none" />
        </svg>
      </div>
      <div className="ml-[5px] flex h-full w-[46px] items-center justify-center border-b-2 border-[#e87722] bg-[#a3703f]">
        <svg width="22" height="20" viewBox="0 0 22 20"><path d="M1 2h8l2 2h10v15H1z" fill="#f2d26a" /><rect x="1" y="7" width="20" height="12" fill="#f7e08c" /><rect x="6" y="13" width="10" height="6" fill="#2a78c8" /></svg>
      </div>
      <div className="ml-[5px] flex h-full w-[40px] items-center justify-center border-b-2 border-[#7aaee0]">
        <div className="relative h-[24px] w-[24px] rounded-full bg-[#d2593a]">
          <div className="absolute -left-[3px] top-[5px] flex h-[14px] w-[13px] items-center justify-center rounded-[1px] bg-[#b7472a] text-[10px] font-bold text-white">P</div>
        </div>
      </div>
      <div className="ml-[4px] flex h-full w-[46px] items-center justify-center border-b-2 border-[#7aaee0] bg-[#4d5d6b]">
        <div className="relative h-[22px] w-[22px] bg-[#2f9e63]">
          <div className="absolute inset-y-0 right-0 w-[11px] bg-[#1e7145]" />
          <div className="absolute -left-[6px] top-[4px] flex h-[14px] w-[14px] items-center justify-center bg-[#185c37] text-[10px] font-bold text-white">X</div>
        </div>
      </div>
      <div className="ml-auto flex items-center">
        <svg width="16" height="18" viewBox="0 0 16 18"><path d="M2 16c0-3 2-3 3-6l3-7c1-2 3-1 2 1l-3 9c-1 2-4 4-5 3zM9 8l5 2-3 2" fill="none" stroke="#e8e8e8" strokeWidth="1.100" /></svg>
        <div className="ml-[20px] mr-[10px] flex w-[64px] flex-col items-center leading-[17px] tracking-[0.3px]">
          <div>오전 9:50</div>
          <div>2021-09-13</div>
        </div>
      </div>
    </div>
  );
}

export default function App() {
  return (
    <div className="flex h-[1044px] w-[1832px] flex-col overflow-hidden bg-[#111] font-['Noto_Sans_CJK_KR','Liberation_Sans',sans-serif]">
      <TitleBar />
      <Ribbon />
      <FormulaBar />
      <ColumnHeader />
      <div className="flex h-[730px]">
        <RowHeader />
        <Sheet />
        <VScroll />
      </div>
      <SheetTabs />
      <StatusBar />
      <Taskbar />
    </div>
  );
}
